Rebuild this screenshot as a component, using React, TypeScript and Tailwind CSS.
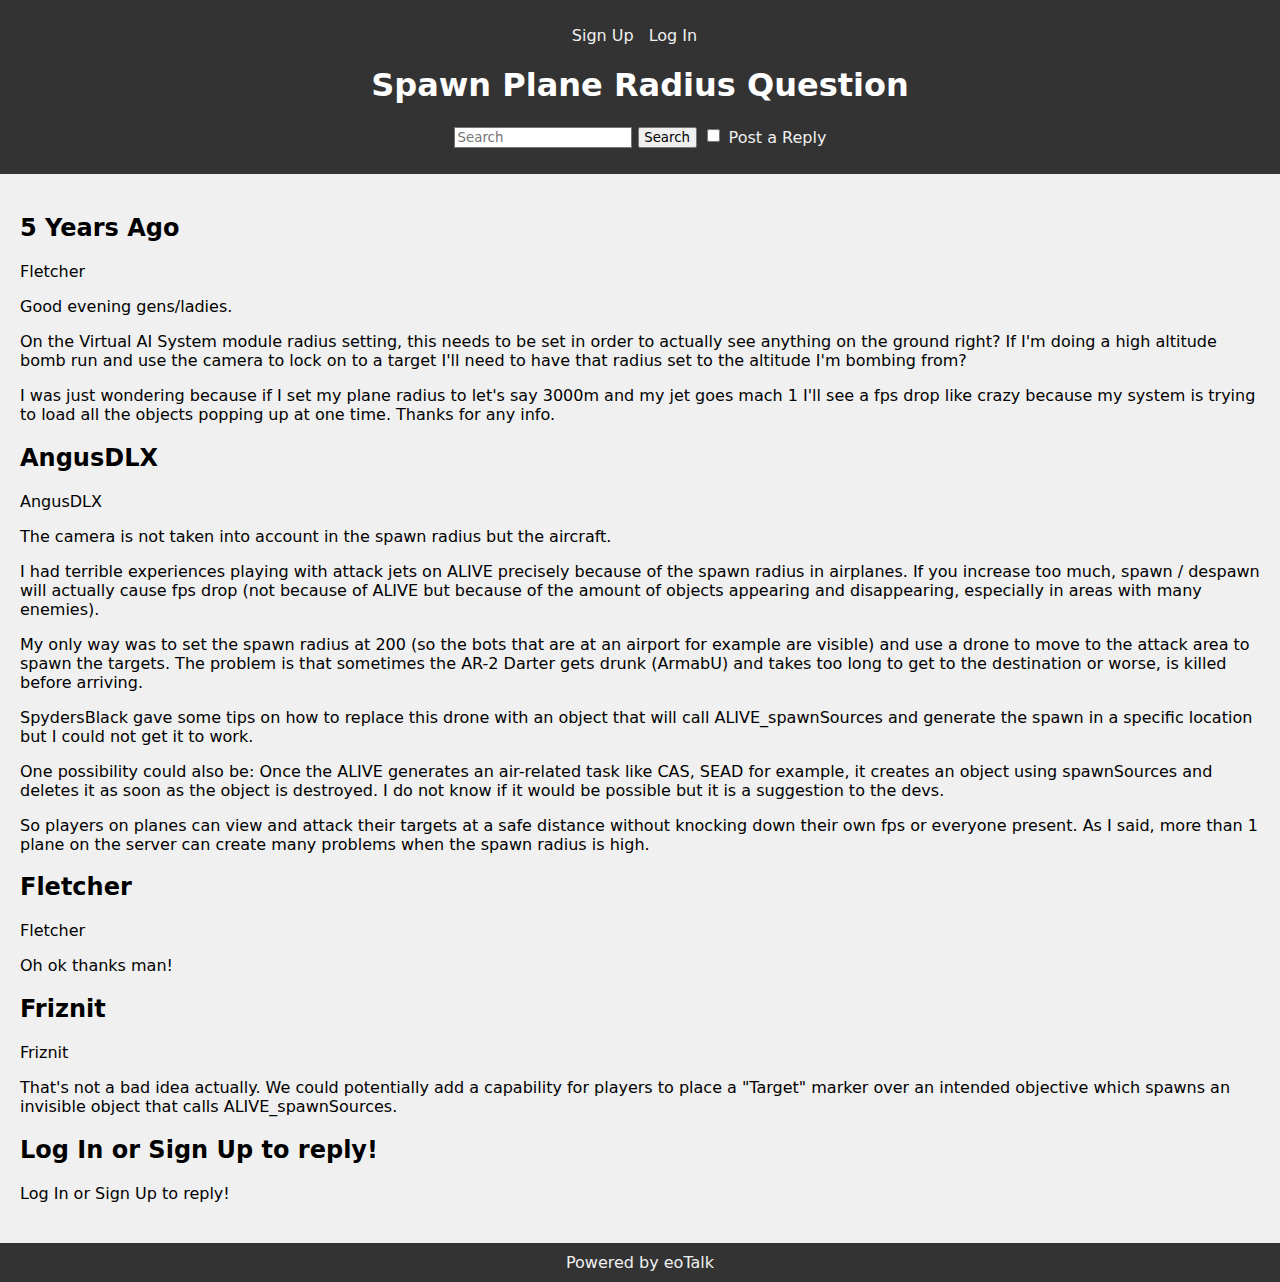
const posts = [
  {
    title: "5 Years Ago",
    author: "Fletcher",
    body: [
      "Good evening gens/ladies.",
      "On the Virtual AI System module radius setting, this needs to be set in order to actually see anything on the ground right? If I'm doing a high altitude bomb run and use the camera to lock on to a target I'll need to have that radius set to the altitude I'm bombing from?",
      "I was just wondering because if I set my plane radius to let's say 3000m and my jet goes mach 1 I'll see a fps drop like crazy because my system is trying to load all the objects popping up at one time. Thanks for any info.",
    ],
  },
  {
    title: "AngusDLX",
    author: "AngusDLX",
    body: [
      "The camera is not taken into account in the spawn radius but the aircraft.",
      "I had terrible experiences playing with attack jets on ALIVE precisely because of the spawn radius in airplanes. If you increase too much, spawn / despawn will actually cause fps drop (not because of ALIVE but because of the amount of objects appearing and disappearing, especially in areas with many enemies).",
      "My only way was to set the spawn radius at 200 (so the bots that are at an airport for example are visible) and use a drone to move to the attack area to spawn the targets. The problem is that sometimes the AR-2 Darter gets drunk (ArmabU) and takes too long to get to the destination or worse, is killed before arriving.",
      "SpydersBlack gave some tips on how to replace this drone with an object that will call ALIVE_spawnSources and generate the spawn in a specific location but I could not get it to work.",
      "One possibility could also be: Once the ALIVE generates an air-related task like CAS, SEAD for example, it creates an object using spawnSources and deletes it as soon as the object is destroyed. I do not know if it would be possible but it is a suggestion to the devs.",
      "So players on planes can view and attack their targets at a safe distance without knocking down their own fps or everyone present. As I said, more than 1 plane on the server can create many problems when the spawn radius is high.",
    ],
  },
  {
    title: "Fletcher",
    author: "Fletcher",
    body: ["Oh ok thanks man!"],
  },
  {
    title: "Friznit",
    author: "Friznit",
    body: [
      'That\'s not a bad idea actually. We could potentially add a capability for players to place a "Target" marker over an intended objective which spawns an invisible object that calls ALIVE_spawnSources.',
    ],
  },
]

const App = () => {
  return (
    <div className="min-h-[1282px] flex flex-col bg-[#f0f0f0] text-black text-[16px] leading-[normal] font-['DejaVu_Sans',sans-serif]">
      <header className="bg-[#333333] text-[#f0f0f0] text-center px-5 py-[10px]">
        <nav className="my-4 flex justify-center gap-[15px] pr-[11px]">
          <a href="#">Sign Up</a>
          <a href="#">Log In</a>
        </nav>
        <h1 className="my-[21.44px] text-[32px] font-bold text-white">Spawn Plane Radius Question</h1>
        <form className="my-4 pt-px flex justify-center items-center">
          <input
            className="w-[178px] h-[21px] bg-white border border-[#767676] px-[3px] text-[13.33px] text-black placeholder:text-[#757575] outline-none"
            placeholder="Search"
          />
          <button
            type="button"
            className="ml-[6px] h-[21px] w-[59px] bg-[#efefef] border border-[#767676] rounded-[2px] text-[13.33px] text-black"
          >
            Search
          </button>
          <input type="checkbox" className="ml-[10px] mr-[9px] w-[13px] h-[13px] -mt-[3px]" />
          <label>Post a Reply</label>
        </form>
      </header>
      <main className="flex-1 p-5">
        {posts.map((p, i) => (
          <div key={i}>
            <h2 className="my-[19.92px] text-[24px] font-bold">{p.title}</h2>
            <p className="my-4">{p.author}</p>
            {p.body.map((t, j) => (
              <p key={j} className="my-4">{t}</p>
            ))}
          </div>
        ))}
        <h2 className="my-[19.92px] text-[24px] font-bold">Log In or Sign Up to reply!</h2>
        <p className="my-4">Log In or Sign Up to reply!</p>
      </main>
      <footer className="bg-[#333333] text-[#f0f0f0] text-center p-[10px]">Powered by eoTalk</footer>
    </div>
  )
}

export default App
